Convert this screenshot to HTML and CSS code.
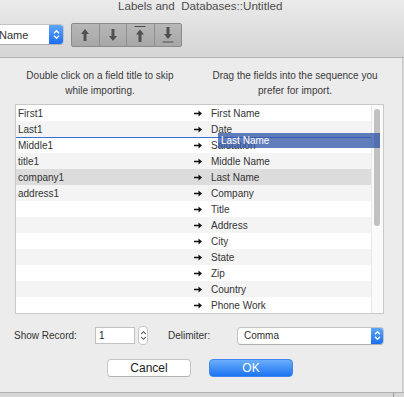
FILE: index.html
```html
<!DOCTYPE html>
<html>
<head>
<meta charset="utf-8">
<link rel="stylesheet" href="styles.css">
</head>
<body>
<div class="titlebar">
  <div class="title">Labels and&nbsp; Databases::Untitled</div>
  <div class="toolbar">
    <div class="popup name-popup">
      <span class="popup-text">Name</span>
      <span class="stepper-blue">
        <svg width="7" height="11" viewBox="0 0 7 11"><path d="M1 4.2 L3.5 1.7 L6 4.2 M1 6.8 L3.5 9.3 L6 6.8" fill="none" stroke="#fff" stroke-width="1.3"/></svg>
      </span>
    </div>
    <div class="btngroup">
      <div class="tbtn"><svg width="10" height="14" viewBox="0 0 10 14"><path d="M5 1 L9 6 L6.5 6 L6.5 13 L3.5 13 L3.5 6 L1 6 Z" fill="#505050"/></svg></div>
      <div class="tbtn"><svg width="10" height="14" viewBox="0 0 10 14"><path d="M5 13 L9 8 L6.5 8 L6.5 1 L3.5 1 L3.5 8 L1 8 Z" fill="#505050"/></svg></div>
      <div class="tbtn"><svg width="12" height="17" viewBox="0 0 12 17"><rect x="0.5" y="0" width="11" height="1" fill="#505050"/><path d="M6 3.5 L10 8.5 L7.5 8.5 L7.5 16 L4.5 16 L4.5 8.5 L2 8.5 Z" fill="#505050"/></svg></div>
      <div class="tbtn"><svg width="12" height="17" viewBox="0 0 12 17"><path d="M6 13 L10 8 L7.5 8 L7.5 1 L4.5 1 L4.5 8 L2 8 Z" fill="#505050"/><rect x="0.5" y="15.5" width="11" height="1" fill="#505050"/></svg></div>
    </div>
  </div>
</div>

<div class="sheet">
  <div class="instructions">
    <p>Double click on a field title to skip<br>while importing.</p>
    <p>Drag the fields into the sequence you<br>prefer for import.</p>
  </div>

  <div class="table">
    <div class="rows">
      <div class="row"><span class="src">First1</span><span class="arr"><svg width="8" height="7" viewBox="0 0 8 7"><path d="M0 2.7 H4.5 V0.5 L8 3.5 L4.5 6.5 V4.3 H0 Z" fill="#111"/></svg></span><span class="dst">First Name</span></div>
      <div class="row alt"><span class="src">Last1</span><span class="arr"><svg width="8" height="7" viewBox="0 0 8 7"><path d="M0 2.7 H4.5 V0.5 L8 3.5 L4.5 6.5 V4.3 H0 Z" fill="#111"/></svg></span><span class="dst">Date</span></div>
      <div class="row"><span class="src">Middle1</span><span class="arr"><svg width="8" height="7" viewBox="0 0 8 7"><path d="M0 2.7 H4.5 V0.5 L8 3.5 L4.5 6.5 V4.3 H0 Z" fill="#111"/></svg></span><span class="dst">Salutation</span></div>
      <div class="row alt"><span class="src">title1</span><span class="arr"><svg width="8" height="7" viewBox="0 0 8 7"><path d="M0 2.7 H4.5 V0.5 L8 3.5 L4.5 6.5 V4.3 H0 Z" fill="#111"/></svg></span><span class="dst">Middle Name</span></div>
      <div class="row sel"><span class="src">company1</span><span class="arr"><svg width="8" height="7" viewBox="0 0 8 7"><path d="M0 2.7 H4.5 V0.5 L8 3.5 L4.5 6.5 V4.3 H0 Z" fill="#111"/></svg></span><span class="dst">Last Name</span></div>
      <div class="row alt"><span class="src">address1</span><span class="arr"><svg width="8" height="7" viewBox="0 0 8 7"><path d="M0 2.7 H4.5 V0.5 L8 3.5 L4.5 6.5 V4.3 H0 Z" fill="#111"/></svg></span><span class="dst">Company</span></div>
      <div class="row"><span class="src"></span><span class="arr"><svg width="8" height="7" viewBox="0 0 8 7"><path d="M0 2.7 H4.5 V0.5 L8 3.5 L4.5 6.5 V4.3 H0 Z" fill="#111"/></svg></span><span class="dst">Title</span></div>
      <div class="row alt"><span class="src"></span><span class="arr"><svg width="8" height="7" viewBox="0 0 8 7"><path d="M0 2.7 H4.5 V0.5 L8 3.5 L4.5 6.5 V4.3 H0 Z" fill="#111"/></svg></span><span class="dst">Address</span></div>
      <div class="row"><span class="src"></span><span class="arr"><svg width="8" height="7" viewBox="0 0 8 7"><path d="M0 2.7 H4.5 V0.5 L8 3.5 L4.5 6.5 V4.3 H0 Z" fill="#111"/></svg></span><span class="dst">City</span></div>
      <div class="row alt"><span class="src"></span><span class="arr"><svg width="8" height="7" viewBox="0 0 8 7"><path d="M0 2.7 H4.5 V0.5 L8 3.5 L4.5 6.5 V4.3 H0 Z" fill="#111"/></svg></span><span class="dst">State</span></div>
      <div class="row"><span class="src"></span><span class="arr"><svg width="8" height="7" viewBox="0 0 8 7"><path d="M0 2.7 H4.5 V0.5 L8 3.5 L4.5 6.5 V4.3 H0 Z" fill="#111"/></svg></span><span class="dst">Zip</span></div>
      <div class="row alt"><span class="src"></span><span class="arr"><svg width="8" height="7" viewBox="0 0 8 7"><path d="M0 2.7 H4.5 V0.5 L8 3.5 L4.5 6.5 V4.3 H0 Z" fill="#111"/></svg></span><span class="dst">Country</span></div>
      <div class="row"><span class="src"></span><span class="arr"><svg width="8" height="7" viewBox="0 0 8 7"><path d="M0 2.7 H4.5 V0.5 L8 3.5 L4.5 6.5 V4.3 H0 Z" fill="#111"/></svg></span><span class="dst">Phone Work</span></div>
      <div class="dropline"></div>
    </div>
    <div class="scrollbar"><div class="thumb"></div></div>
    <div class="ghost">Last Name</div>
  </div>

  <div class="controls">
    <span class="label rec-label">Show Record:</span>
    <span class="field">1</span>
    <span class="mini-stepper">
      <svg width="7" height="13" viewBox="0 0 7 13"><path d="M1.2 5 L3.5 2.7 L5.8 5 M1.2 8 L3.5 10.3 L5.8 8" fill="none" stroke="#666" stroke-width="1.1"/></svg>
    </span>
    <span class="label delim-label">Delimiter:</span>
    <div class="popup delim-popup">
      <span class="popup-text">Comma</span>
      <span class="stepper-blue">
        <svg width="7" height="11" viewBox="0 0 7 11"><path d="M1 4.2 L3.5 1.7 L6 4.2 M1 6.8 L3.5 9.3 L6 6.8" fill="none" stroke="#fff" stroke-width="1.3"/></svg>
      </span>
    </div>
  </div>

  <div class="buttons">
    <div class="btn cancel">Cancel</div>
    <div class="btn ok">OK</div>
  </div>
</div>
<div class="under"><div class="under-line"></div></div>
</body>
</html>
```

FILE: styles.css
```css
* { box-sizing: border-box; }
html, body { margin: 0; padding: 0; }
body {
  width: 404px;
  height: 397px;
  overflow: hidden;
  font-family: "Liberation Sans", Arial, sans-serif;
  font-size: 10px;
  color: #333;
  background: #d9d9d9;
}

.titlebar {
  height: 58px;
  background: linear-gradient(#ebebeb, #d4d4d4);
  border-bottom: 1px solid #b3b3b3;
  overflow: hidden;
}
.title {
  height: 12px;
  line-height: 12px;
  font-size: 11.6px;
  color: #4d4d4d;
  padding-left: 118px;
  white-space: nowrap;
}
.toolbar {
  height: 45px;
  display: flex;
  align-items: center;
}

.popup {
  display: flex;
  align-items: stretch;
  background: #fff;
  border: 1px solid #c3c3c3;
  border-bottom-color: #b0b0b0;
  border-radius: 4px;
  overflow: hidden;
}
.popup-text {
  flex: 1;
  display: flex;
  align-items: center;
  color: #2e2e2e;
}
.stepper-blue {
  width: 13px;
  display: flex;
  align-items: center;
  justify-content: center;
  background: linear-gradient(#5ea6fb, #1b6ff0);
}
.name-popup {
  margin-left: -12px;
  width: 76px;
  height: 21px;
}
.name-popup .popup-text { padding-left: 10px; font-size: 11px; color: #333; }
.name-popup .stepper-blue { width: 14px; }

.btngroup {
  margin-left: 7px;
  width: 111px;
  height: 24px;
  display: flex;
  border: 1px solid #8c8c8c;
  border-radius: 2px;
  background: linear-gradient(#b7b7b7, #a7a7a7);
  overflow: hidden;
}
.tbtn {
  flex: 1;
  display: flex;
  align-items: center;
  justify-content: center;
  border-left: 1px solid #8f8f8f;
}
.tbtn:first-child { border-left: none; }

.sheet {
  height: 334px;
  width: 403px;
  background: #ececec;
  border-right: 1px solid #c9c9c9;
  padding-top: 10px;
}
.instructions {
  display: grid;
  grid-template-columns: 190px 190px;
  column-gap: 5px;
  margin-left: 5px;
}
.instructions p {
  margin: 0;
  text-align: center;
  line-height: 15px;
  color: #3a3a3a;
  white-space: nowrap;
}

.table {
  position: relative;
  margin: 6px 0 0 15px;
  width: 369px;
  height: 210px;
  border: 1px solid #c9c9c9;
  background: #fff;
  display: flex;
}
.rows {
  position: relative;
  width: 355px;
}
.row {
  height: 16px;
  display: flex;
  align-items: center;
  background: #fff;
  line-height: 17px;
  white-space: nowrap;
}
.row.alt { background: #f4f4f4; }
.row.sel { background: #dcdcdc; }
.src { width: 176px; padding-left: 2px; color: #333; }
.arr { width: 12px; padding-left: 2px; display: flex; align-items: center; }
.dst { flex: 1; padding-left: 7px; color: #333; }

.dropline {
  position: absolute;
  left: 0;
  top: 32px;
  width: 355px;
  height: 1px;
  background: #3a6fd8;
}
.scrollbar {
  width: 12px;
  border-left: 1px solid #e8e8e8;
  background: #fafafa;
  padding: 4px 0 0 2px;
}
.thumb {
  width: 6px;
  height: 117px;
  border-radius: 3px;
  background: #c1c1c1;
}
.ghost {
  position: absolute;
  left: 202px;
  top: 28px;
  width: 162px;
  height: 15px;
  background: rgba(52, 88, 168, 0.78);
  color: #fff;
  line-height: 15px;
  padding-left: 3px;
  font-size: 10px;
}

.controls {
  margin-top: 12px;
  height: 19px;
  display: flex;
  align-items: center;
}
.label { color: #333; white-space: nowrap; }
.rec-label { margin-left: 14px; width: 81px; }
.field {
  width: 40px;
  height: 17px;
  background: #fff;
  border: 1px solid #c2c2c2;
  line-height: 15px;
  padding-left: 3px;
  color: #222;
}
.mini-stepper {
  margin-left: 3px;
  width: 10px;
  height: 19px;
  background: #fff;
  border: 1px solid #c6c6c6;
  border-radius: 4px;
  display: flex;
  align-items: center;
  justify-content: center;
}
.delim-label { margin-left: 20px; width: 69px; }
.delim-popup {
  width: 147px;
  height: 18px;
}
.delim-popup .popup-text { padding-left: 6px; color: #2e2e2e; }
.delim-popup .stepper-blue { width: 12px; }

.buttons {
  margin-top: 14px;
  display: flex;
}
.btn {
  width: 84px;
  height: 18px;
  border-radius: 4px;
  font-size: 12px;
  line-height: 16px;
  text-align: center;
}
.cancel {
  margin-left: 107px;
  background: #fff;
  border: 1px solid #c5c5c5;
  border-bottom-color: #b3b3b3;
  color: #222;
}
.ok {
  margin-left: 18px;
  background: linear-gradient(#6aaefb, #1d74f1);
  border: 1px solid #3f87ee;
  color: #fff;
}

.under {
  height: 5px;
  border-top: 1px solid #b0b0b0;
  background: #d6d6d6;
}
.under-line {
  margin-left: 393px;
  height: 4px;
  border-left: 1px solid #9a9a9a;
}
```
